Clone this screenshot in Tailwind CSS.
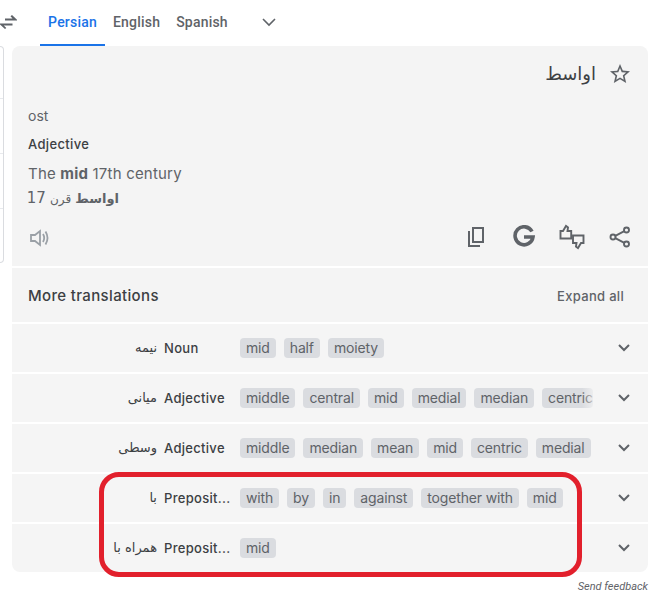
<!DOCTYPE html>
<html lang="en">
<head>
    <meta charset="UTF-8">
    <meta name="viewport" content="width=device-width, initial-scale=1.0">
    <title>Translations</title>
    <script src="https://cdn.jsdelivr.net/npm/@tailwindcss/browser@4"></script>
</head>
<body class="relative w-[666px] h-[598px] overflow-hidden bg-white text-[#3c4043] font-['Inter','DejaVu_Sans',sans-serif]">

    <!-- tabs -->
    <div class="flex h-[46px] items-stretch">
        <div class="w-[40px] flex items-center">
            <svg class="w-[18px] h-[14px] mb-[2px]" viewBox="0 0 18 14" fill="#5f6368"><path d="M5 3.500h7.500L10.500 1.200 12 0l5 4.800v.8H5zM12.500 8.500H0v1L5 14l1.300-1.100L3.800 10.500h8.700z"/></svg>
        </div>
        <div class="w-[65px] flex items-center justify-center border-b-2 border-[#1a73e8] text-[#1a73e8] font-['Roboto'] font-medium text-[14px] tracking-[0.2px]">Persian</div>
        <div class="ml-[8px] flex items-center text-[#5f6368] font-['Roboto'] font-medium text-[14px] tracking-[0.2px] pb-[2px]">English</div>
        <div class="ml-[16px] flex items-center text-[#5f6368] font-['Roboto'] font-medium text-[14px] tracking-[0.2px] pb-[2px]">Spanish</div>
        <div class="ml-[34px] flex items-center pb-[2px]">
            <svg class="w-[14px] h-[9px]" viewBox="0 0 14 9" fill="none" stroke="#5f6368" stroke-width="1.600"><path d="M1 1l6 6 6-6"/></svg>
        </div>
    </div>

    <!-- left source panel edge -->
    <div class="absolute left-0 top-[46px] w-[4px] h-[217px] bg-white border-r border-b border-t border-[#dadce0] rounded-br-lg rounded-tr-lg flex flex-col">
        <div class="h-[52px] border-b border-[#e8eaed]"></div>
        <div class="h-[55px] border-b border-[#e8eaed]"></div>
        <div class="h-[55px] border-b border-[#e8eaed]"></div>
    </div>

    <div class="ml-[12px] w-[636px] flex flex-col gap-[2px]">
        <!-- main result -->
        <div class="h-[220px] bg-[#f4f4f4] rounded-t-lg relative px-[16px]">
            <div class="flex justify-end items-center pt-[13px] h-[42px]">
                <span dir="rtl" class="font-['DejaVu_Sans'] text-[18px] text-[#3c4043]">اواسط</span>
                <svg class="w-[24px] h-[24px] ml-[12px]" viewBox="0 0 24 24" fill="#5f6368"><path d="M22 9.240l-7.190-.62L12 2 9.190 8.630 2 9.240l5.460 4.730L5.820 21 12 17.270 18.180 21l-1.630-7.030L22 9.240zM12 15.400l-3.760 2.270 1-4.280-3.320-2.880 4.380-.38L12 6.100l1.710 4.040 4.380.38-3.320 2.880 1 4.280L12 15.400z"/></svg>
            </div>
            <div class="mt-[18px] text-[14px] leading-[20px] text-[#5f6368]">ost</div>
            <div class="mt-[8px] text-[13px] leading-[20px] font-medium tracking-[0.35px] text-[#3c4043]">Adjective</div>
            <div class="mt-[10px] text-[15px] leading-[20px] tracking-[0.2px] text-[#5f6368]">The <b class="font-bold">mid</b> 17th century</div>
            <div dir="rtl" class="mt-[4px] text-[13px] leading-[20px] text-[#5f6368] w-[91px] whitespace-nowrap font-['DejaVu_Sans']"><b class="font-bold">اواسط</b> <span class="text-[12px]">قرن</span> <span class="text-[15px]">17</span></div>
            <svg class="absolute left-[16px] top-[181px] w-[22px] h-[22px]" viewBox="0 0 22 22" fill="none" stroke="#9aa0a6" stroke-width="1.800"><path d="M3 8h4l5-4v14l-5-4H3z"/><path d="M15 7c1.500 2.500 1.500 5.500 0 8M17.500 4.500c2.500 4 2.500 9 0 13" /></svg>
            <div class="absolute right-[16px] top-[179px] flex items-center gap-[24px]">
                <svg class="w-[24px] h-[24px]" viewBox="0 0 24 24" fill="none" stroke="#5f6368" stroke-width="2"><path d="M9 3h10v14H9z"/><path d="M5 6v15h11"/></svg>
                <svg class="w-[24px] h-[24px]" viewBox="0 0 24 24" fill="none" stroke="#5f6368" stroke-width="3.600"><path d="M20 6.500A9 9 0 1 0 21 12h-9"/></svg>
                <svg class="w-[26px] h-[26px] -my-[1px] -mx-[1px]" viewBox="0 0 26 26" fill="none" stroke="#5f6368" stroke-width="1.900"><path d="M1.500 14.500V7H4l3-5 2 1.500L8.500 7h3.700v7.500z"/><path d="M14 11.500h10.500V19H22l-3 5-2-1.500.5-3.500H14z"/></svg>
                <svg class="w-[24px] h-[24px]" viewBox="0 0 24 24" fill="none" stroke="#5f6368" stroke-width="1.900"><circle cx="18.500" cy="5" r="2.500"/><circle cx="5" cy="12" r="2.500"/><circle cx="18.500" cy="19" r="2.500"/><path d="M7.300 10.800l9-4.600M7.300 13.200l9 4.600"/></svg>
            </div>
        </div>

        <!-- more translations -->
        <div class="h-[54px] bg-[#f4f4f4] flex items-center justify-between pl-[16px] pr-[24px] pt-[3px]">
            <span class="text-[15px] font-medium tracking-[0.35px] text-[#3c4043]">More translations</span>
            <span class="text-[13px] font-medium tracking-[0.3px] text-[#5f6368]">Expand all</span>
        </div>

        <div class="h-[48px] bg-[#f5f5f5] flex items-center relative">
            <span dir="rtl" class="w-[145px] text-right font-['DejaVu_Sans'] text-[13px] text-[#3c4043]">نیمه</span>
            <span class="ml-[7px] w-[76px] whitespace-nowrap pt-[1px] text-[13px] font-medium tracking-[0.3px] text-[#3c4043]">Noun</span>
            <div class="flex gap-[8px] text-[14px] tracking-[-0.15px] text-[#5f6368]">
                <span class="h-[20px] leading-[20px] px-[6px] rounded bg-[#dadce0]">mid</span>
                <span class="h-[20px] leading-[20px] px-[6px] rounded bg-[#dadce0]">half</span>
                <span class="h-[20px] leading-[20px] px-[6px] rounded bg-[#dadce0]">moiety</span>
            </div>
            <svg class="absolute right-[18px] w-[12px] h-[8px]" viewBox="0 0 12 8" fill="none" stroke="#5f6368" stroke-width="2"><path d="M1 1l5 5 5-5"/></svg>
        </div>

        <div class="h-[48px] bg-[#f5f5f5] flex items-center relative">
            <span dir="rtl" class="w-[145px] text-right font-['DejaVu_Sans'] text-[13px] text-[#3c4043]">میانی</span>
            <span class="ml-[7px] w-[76px] whitespace-nowrap pt-[1px] text-[13px] font-medium tracking-[0.3px] text-[#3c4043]">Adjective</span>
            <div class="w-[358px] relative overflow-hidden">
                <div class="flex gap-[8px] text-[14px] tracking-[-0.15px] text-[#5f6368] whitespace-nowrap">
                    <span class="h-[20px] leading-[20px] px-[6px] rounded bg-[#dadce0]">middle</span>
                    <span class="h-[20px] leading-[20px] px-[6px] rounded bg-[#dadce0]">central</span>
                    <span class="h-[20px] leading-[20px] px-[6px] rounded bg-[#dadce0]">mid</span>
                    <span class="h-[20px] leading-[20px] px-[6px] rounded bg-[#dadce0]">medial</span>
                    <span class="h-[20px] leading-[20px] px-[6px] rounded bg-[#dadce0]">median</span>
                    <span class="h-[20px] leading-[20px] pl-[6px] rounded bg-[#dadce0]">centric</span>
                </div>
                <div class="absolute right-0 top-0 h-[20px] w-[16px] bg-gradient-to-r from-transparent to-[#f5f5f5]"></div>
            </div>
            <svg class="absolute right-[18px] w-[12px] h-[8px]" viewBox="0 0 12 8" fill="none" stroke="#5f6368" stroke-width="2"><path d="M1 1l5 5 5-5"/></svg>
        </div>

        <div class="h-[48px] bg-[#f5f5f5] flex items-center relative">
            <span dir="rtl" class="w-[145px] text-right font-['DejaVu_Sans'] text-[13px] text-[#3c4043]">وسطی</span>
            <span class="ml-[7px] w-[76px] whitespace-nowrap pt-[1px] text-[13px] font-medium tracking-[0.3px] text-[#3c4043]">Adjective</span>
            <div class="flex gap-[8px] text-[14px] tracking-[-0.15px] text-[#5f6368] whitespace-nowrap">
                <span class="h-[20px] leading-[20px] px-[6px] rounded bg-[#dadce0]">middle</span>
                <span class="h-[20px] leading-[20px] px-[6px] rounded bg-[#dadce0]">median</span>
                <span class="h-[20px] leading-[20px] px-[6px] rounded bg-[#dadce0]">mean</span>
                <span class="h-[20px] leading-[20px] px-[6px] rounded bg-[#dadce0]">mid</span>
                <span class="h-[20px] leading-[20px] px-[6px] rounded bg-[#dadce0]">centric</span>
                <span class="h-[20px] leading-[20px] px-[6px] rounded bg-[#dadce0]">medial</span>
            </div>
            <svg class="absolute right-[18px] w-[12px] h-[8px]" viewBox="0 0 12 8" fill="none" stroke="#5f6368" stroke-width="2"><path d="M1 1l5 5 5-5"/></svg>
        </div>

        <div class="h-[48px] bg-[#f5f5f5] flex items-center relative">
            <span dir="rtl" class="w-[145px] text-right font-['DejaVu_Sans'] text-[13px] text-[#3c4043]">با</span>
            <span class="ml-[7px] w-[76px] whitespace-nowrap pt-[1px] text-[13px] font-medium tracking-[0.3px] text-[#3c4043]">Preposit...</span>
            <div class="flex gap-[8px] text-[14px] tracking-[-0.15px] text-[#5f6368] whitespace-nowrap">
                <span class="h-[20px] leading-[20px] px-[6px] rounded bg-[#dadce0]">with</span>
                <span class="h-[20px] leading-[20px] px-[6px] rounded bg-[#dadce0]">by</span>
                <span class="h-[20px] leading-[20px] px-[6px] rounded bg-[#dadce0]">in</span>
                <span class="h-[20px] leading-[20px] px-[6px] rounded bg-[#dadce0]">against</span>
                <span class="h-[20px] leading-[20px] px-[6px] rounded bg-[#dadce0]">together with</span>
                <span class="h-[20px] leading-[20px] px-[6px] rounded bg-[#dadce0]">mid</span>
            </div>
            <svg class="absolute right-[18px] w-[12px] h-[8px]" viewBox="0 0 12 8" fill="none" stroke="#5f6368" stroke-width="2"><path d="M1 1l5 5 5-5"/></svg>
        </div>

        <div class="h-[48px] bg-[#f5f5f5] rounded-b-lg flex items-center relative">
            <span dir="rtl" class="w-[145px] text-right font-['DejaVu_Sans'] text-[13px] text-[#3c4043]">همراه با</span>
            <span class="ml-[7px] w-[76px] whitespace-nowrap pt-[1px] text-[13px] font-medium tracking-[0.3px] text-[#3c4043]">Preposit...</span>
            <div class="flex gap-[8px] text-[14px] tracking-[-0.15px] text-[#5f6368] whitespace-nowrap">
                <span class="h-[20px] leading-[20px] px-[6px] rounded bg-[#dadce0]">mid</span>
            </div>
            <svg class="absolute right-[18px] w-[12px] h-[8px]" viewBox="0 0 12 8" fill="none" stroke="#5f6368" stroke-width="2"><path d="M1 1l5 5 5-5"/></svg>
        </div>

        <div class="mt-[5px] text-right text-[11px] italic text-[#5f6368] font-['Roboto']">Send feedback</div>
    </div>

    <!-- red annotation -->
    <div class="absolute left-[99px] top-[472px] w-[483px] h-[105px] border-[5px] border-[#e2202c] rounded-[20px]"></div>

</body>
</html>
